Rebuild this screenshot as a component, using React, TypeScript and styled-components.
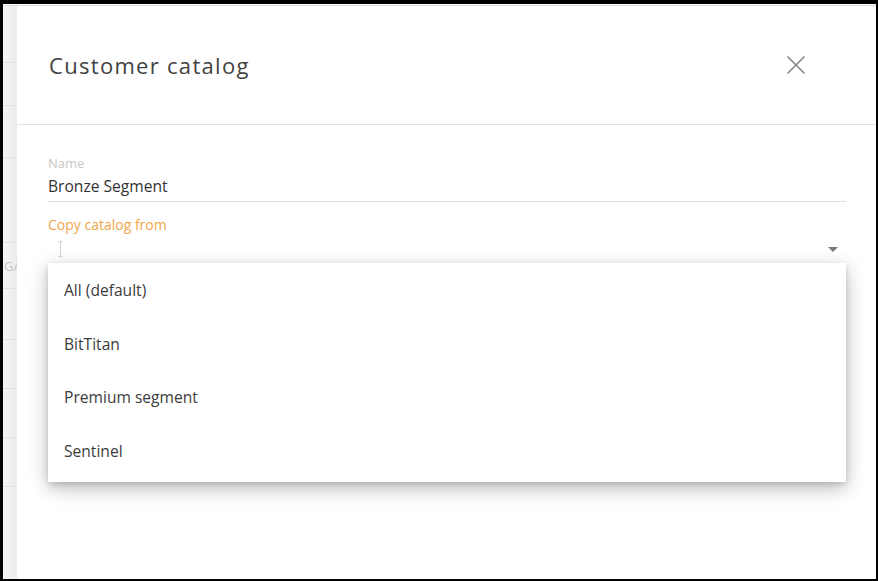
import React from 'react'
import styled, { createGlobalStyle } from 'styled-components'

const GlobalStyle = createGlobalStyle`
  html, body {
    margin: 0;
    padding: 0;
    background: #fff;
  }
  body {
    font-family: "Open Sans", "Noto Sans", Arial, sans-serif;
  }
`

const Frame = styled.div`
  box-sizing: border-box;
  width: 878px;
  height: 581px;
  border-style: solid;
  border-color: #000;
  border-width: 4px 2px 2px 3px;
  padding-top: 1px;
  background: #fff;
  display: flex;
  flex-direction: column;
  overflow: hidden;
`

const Stage = styled.div`
  flex: 1;
  display: flex;
  border-top: 1px solid #dcdcdc;
  min-height: 0;
`

const Backdrop = styled.div`
  width: 14px;
  flex-shrink: 0;
  display: flex;
  flex-direction: column;
  background: linear-gradient(to right, #f4f4f4, #ececec);
  overflow: hidden;
`

const BackdropRow = styled.div<{ $height: number }>`
  box-sizing: border-box;
  height: ${({ $height }) => $height}px;
  flex-shrink: 0;
  border-bottom: 1px solid #e2e2e2;
  display: flex;
  align-items: center;
  font-size: 13px;
  color: #c4c4c4;
  white-space: nowrap;
  padding-left: 1px;
`

const Dialog = styled.div`
  flex: 1;
  display: flex;
  flex-direction: column;
  background: #fff;
`

const Header = styled.div`
  height: 119px;
  box-sizing: border-box;
  display: flex;
  align-items: center;
  justify-content: space-between;
  padding: 0 70px 0 32px;
  border-bottom: 1px solid #e0e0e0;
`

const Title = styled.h1`
  margin: 0;
  font-size: 22px;
  font-weight: 400;
  letter-spacing: 1.3px;
  color: #424242;
`

const CloseButton = styled.button`
  width: 20px;
  height: 20px;
  padding: 0;
  border: none;
  background: none;
  display: flex;
  align-items: center;
  justify-content: center;
  cursor: pointer;
`

const Body = styled.div`
  padding: 29px 30px 0 31px;
  display: flex;
  flex-direction: column;
`

const Field = styled.div`
  display: flex;
  flex-direction: column;
`

const Label = styled.label<{ $active?: boolean }>`
  font-size: ${({ $active }) => ($active ? '14px' : '13px')};
  line-height: 18px;
  color: ${({ $active }) => ($active ? '#f0a54b' : '#c8c8c8')};
`

const Input = styled.div`
  font-size: 15.6px;
  line-height: 24px;
  color: #333;
  padding: 2px 0 3px;
  border-bottom: 1px solid #e0e0e0;
`

const SelectField = styled(Field)`
  margin-top: 14px;
`

const SelectBox = styled.div`
  position: relative;
  height: 30px;
  display: flex;
  align-items: center;
  justify-content: space-between;
  padding: 0 8px 0 10px;
`

const Menu = styled.ul`
  position: absolute;
  top: 29px;
  left: 0;
  right: 0;
  margin: 0;
  padding: 0 0 4px;
  list-style: none;
  background: #fff;
  box-shadow: 0 6px 18px rgba(0, 0, 0, 0.28), 0 2px 5px rgba(0, 0, 0, 0.12);
  z-index: 2;
`

const MenuItem = styled.li`
  height: 53.7px;
  display: flex;
  align-items: center;
  padding-left: 16px;
  font-size: 15.6px;
  color: #3c3c3c;
`

const backdropRows = [57, 43, 52, 85, 46, 51, 49, 49, 49, 120]
const options = ['All (default)', 'BitTitan', 'Premium segment', 'Sentinel']

const CloseIcon = () => (
  <svg width="20" height="20" viewBox="0 0 20 20">
    <path d="M1.5 1.5 L18.5 18.5 M18.5 1.5 L1.5 18.5" stroke="#858585" strokeWidth="1.6" fill="none" />
  </svg>
)

const IBeam = () => (
  <svg width="5" height="16" viewBox="0 0 5 16">
    <path d="M0.5 0.5 H4.5 M2.5 0.5 V15.5 M0.5 15.5 H4.5" stroke="#d2d2d2" strokeWidth="1" fill="none" />
  </svg>
)

const Caret = () => (
  <svg width="10" height="5" viewBox="0 0 10 5">
    <path d="M0 0 H10 L5 5 Z" fill="#7a7a7a" />
  </svg>
)

const App = () => {
  return (
    <Frame>
      <GlobalStyle />
      <Stage>
        <Backdrop>
          {backdropRows.map((h, i) => (
            <BackdropRow key={i} $height={h}>
              {i === 4 ? 'GA' : ''}
            </BackdropRow>
          ))}
        </Backdrop>
        <Dialog>
          <Header>
            <Title>Customer catalog</Title>
            <CloseButton aria-label="Close">
              <CloseIcon />
            </CloseButton>
          </Header>
          <Body>
            <Field>
              <Label>Name</Label>
              <Input>Bronze Segment</Input>
            </Field>
            <SelectField>
              <Label $active>Copy catalog from</Label>
              <SelectBox>
                <IBeam />
                <Caret />
                <Menu>
                  {options.map(o => (
                    <MenuItem key={o}>{o}</MenuItem>
                  ))}
                </Menu>
              </SelectBox>
            </SelectField>
          </Body>
        </Dialog>
      </Stage>
    </Frame>
  )
}

export default App
